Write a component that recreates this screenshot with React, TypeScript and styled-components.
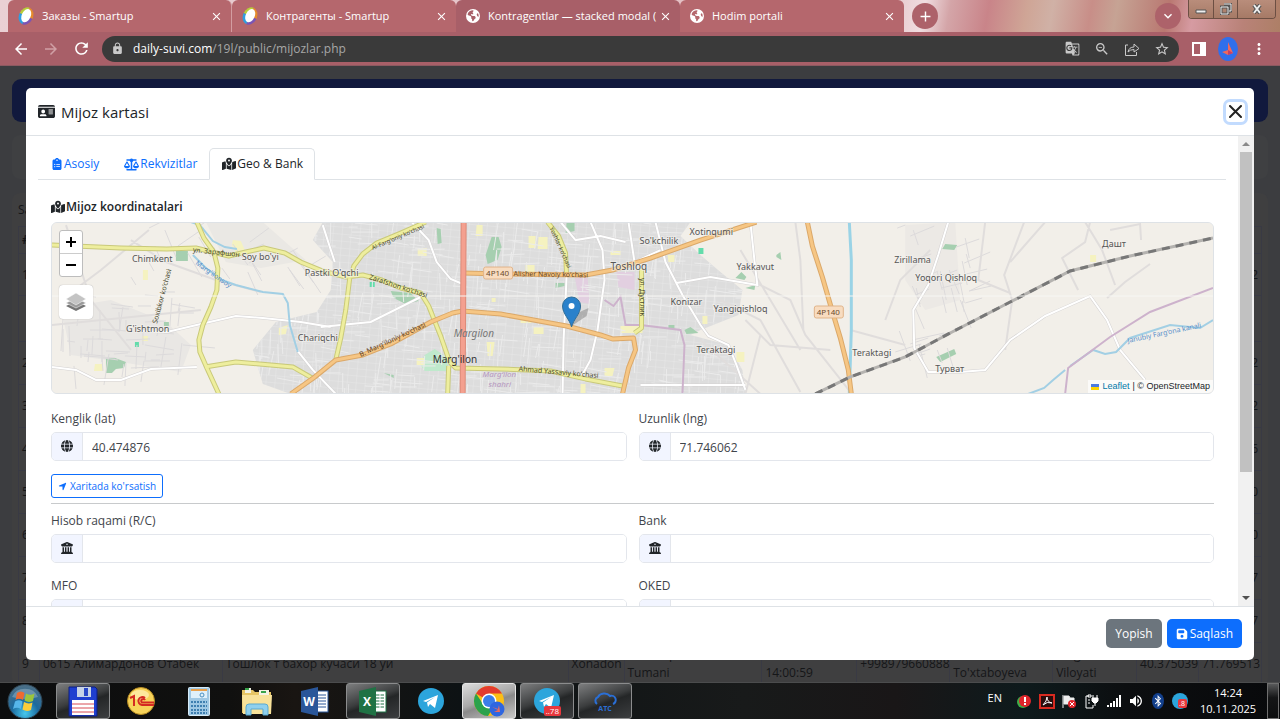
import React from 'react';
import styled, { createGlobalStyle, css } from 'styled-components';
import {
  FaIdCard, FaClipboardList, FaScaleBalanced, FaMapLocationDot, FaGlobe,
  FaLocationArrow, FaBuildingColumns, FaFloppyDisk, FaEarthAmericas, FaBluetoothB,
} from 'react-icons/fa6';
import {
  MdArrowBack, MdArrowForward, MdRefresh, MdLock, MdGTranslate, MdZoomOut,
  MdStarBorder, MdMoreVert, MdClose, MdAdd, MdKeyboardArrowDown, MdVolumeUp,
} from 'react-icons/md';

const GlobalStyle = createGlobalStyle`
  *, *::before, *::after { box-sizing: border-box; }
  body { margin: 0; font-family: "Open Sans", "Noto Sans", sans-serif; font-size: 12px; line-height: 18px; color: #212529; }
  button, input { font: inherit; color: inherit; }
  button { cursor: pointer; padding: 0; border: 0; background: none; }
  svg { display: block; flex: none; }
`;

const Screen = styled.div`
  display: flex;
  flex-direction: column;
  height: 100vh;
  overflow: hidden;
`;

/* ---------- browser chrome ---------- */

const TabStrip = styled.div`
  display: flex;
  align-items: stretch;
  flex: none;
  height: 32px;
  padding-left: 8px;
  background: linear-gradient(100deg, #ead0d4 0%, #e2bcc0 68%, #f0dde0 72%, #d4a5a8 74%, #c98489 77%, #cfa596 80%, #d0b1a6 82%, #c88e88 85%, #c6a394 87%, #b97871 91%, #d69ba2 93%, #b98278 97%, #ad7f66 100%);
`;

const BrowserTab = styled.div<{ $active?: boolean; $divider?: boolean }>`
  display: flex;
  align-items: center;
  width: 224px;
  padding: 0 8px 0 10px;
  color: #fff;
  font-size: 11px;
  border-radius: 6px 6px 0 0;
  background: ${(p) => (p.$active ? '#a85f68' : '#b5676d')};
  ${(p) => p.$divider && css`border-right: 1px solid #d39da1;`}
`;

const TabTitle = styled.span`
  flex: 1;
  margin-left: 8px;
  overflow: hidden;
  white-space: nowrap;
`;

const TabClose = styled.button`
  display: flex;
  color: #fff;
`;

const RoundButton = styled.button<{ $afterTabs?: boolean }>`
  display: flex;
  align-items: center;
  justify-content: center;
  align-self: center;
  width: 26px;
  height: 26px;
  margin-left: ${(p) => (p.$afterTabs ? 8 : 0)}px;
  border-radius: 50%;
  color: #fff;
  background: #ad626a;
`;

const StripSpace = styled.div`
  flex: 1;
`;

const WindowButtons = styled.div`
  display: flex;
  height: 19px;
  margin: 0 4px 0 7px;
  border: 1px solid #6c4f43;
  border-top: 0;
  border-radius: 0 0 4px 4px;
  overflow: hidden;
`;

const WindowButton = styled.button<{ $wide?: boolean }>`
  display: flex;
  align-items: center;
  justify-content: center;
  width: ${(p) => (p.$wide ? 38 : 24)}px;
  background: linear-gradient(#b98d7b, #a67a66);
  & + & { border-left: 1px solid #6c4f43; }
`;

const Toolbar = styled.div`
  display: flex;
  align-items: center;
  flex: none;
  height: 34px;
  padding: 0 12px;
  color: #fff;
  background: #a85f68;
  border-bottom: 1px solid #8c5a61;
`;

const ToolButton = styled.button<{ $dim?: boolean }>`
  display: flex;
  align-items: center;
  justify-content: center;
  width: 18px;
  margin-right: 12px;
  color: ${(p) => (p.$dim ? '#d0a0a5' : '#fff')};
`;

const AddressBar = styled.div`
  display: flex;
  align-items: center;
  flex: 1;
  height: 26px;
  padding: 0 9px;
  gap: 9px;
  border-radius: 13px;
  background: #3a3a3a;
  color: #c9c9c9;
`;

const Address = styled.span`
  flex: 1;
  color: #a7a7a7;
  b { font-weight: 400; color: #fff; }
`;

const AddressIcons = styled.div`
  display: flex;
  gap: 14px;
`;

const ToolbarEnd = styled.div`
  display: flex;
  align-items: center;
  gap: 12px;
  padding-left: 13px;
`;

/* ---------- page behind the dialog ---------- */

const Page = styled.div`
  position: relative;
  flex: 1;
  min-height: 0;
  overflow: hidden;
  padding: 13px 12px 0;
  background: #3c3d40;
  color: #151618;
`;

const NavBar = styled.div`
  height: 43px;
  border-radius: 9px;
  background: #11193d;
`;

const FilterCard = styled.div`
  height: 44px;
  margin-top: 13px;
  border-radius: 8px;
  background: #3f4042;
`;

const ListCard = styled.div`
  margin-top: 14px;
  padding: 8px 6px 0;
  border-radius: 8px;
  background: #3f3f40;
`;

const ListTable = styled.table`
  width: 100%;
  margin-top: 7px;
  table-layout: fixed;
  border-collapse: collapse;
  td, th {
    padding: 0 3px;
    text-align: left;
    white-space: nowrap;
    border: 1px solid #393a44;
  }
`;

const ListRow = styled.tr<{ $h: number }>`
  height: ${(p) => p.$h}px;
  td:last-child { text-align: right; }
`;

const columns = [21, 183, 346, 56, 138, 95, 93, 103, 84, 62, 63];

const rows: [string, string, number][] = [
  ['1', '2', 42], ['', '', 46], ['2', '2', 43], ['3', '2', 43], ['4', '6', 43],
  ['5', '0', 43], ['6', '0', 43], ['7', '7', 43], ['8', '7', 43],
];

/* ---------- dialog ---------- */

const Backdrop = styled.div`
  position: absolute;
  inset: 0;
  display: flex;
  padding: 22px 26px;
`;

const Dialog = styled.section`
  display: flex;
  flex-direction: column;
  flex: 1;
  min-width: 0;
  overflow: hidden;
  border-radius: 5px;
  background: #fff;
  color: #212529;
`;

const DialogHeader = styled.header`
  display: flex;
  align-items: center;
  flex: none;
  height: 48px;
  padding: 0 9px 0 12px;
  gap: 6px;
  border-bottom: 1px solid #dee2e6;
`;

const DialogTitle = styled.h1`
  flex: 1;
  margin: 0;
  font-size: 15px;
  line-height: 20px;
  font-weight: 400;
`;

const CloseButton = styled.button`
  display: flex;
  align-items: center;
  justify-content: center;
  width: 19px;
  height: 20px;
  border-radius: 4px;
  box-shadow: 0 0 0 3px #c2dbfe;
`;

const DialogBody = styled.div`
  display: flex;
  flex: 1;
  min-height: 0;
`;

const ScrollArea = styled.div`
  flex: 1;
  min-width: 0;
  overflow: hidden;
  padding: 12px 12px 0;
`;

const ScrollBar = styled.div`
  display: flex;
  flex-direction: column;
  width: 16px;
  padding: 0 2px;
  background: #f1f1f1;
`;

const ScrollArrow = styled.button`
  display: flex;
  align-items: center;
  justify-content: center;
  flex: none;
  height: 16px;
`;

const ScrollTrack = styled.div`
  flex: 1;
`;

const ScrollThumb = styled.div`
  height: 73%;
  background: #c1c1c1;
`;

const TabList = styled.div`
  display: flex;
  height: 32px;
  border-bottom: 1px solid #dee2e6;
`;

const TabButton = styled.button<{ $active?: boolean }>`
  display: flex;
  align-items: center;
  gap: 1px;
  height: 32px;
  padding: 0 11px 0 12px;
  border: 1px solid transparent;
  border-radius: 5px 5px 0 0;
  color: #0d6efd;
  ${(p) => p.$active && css`
    color: #212529;
    background: #fff;
    border-color: #dee2e6 #dee2e6 #fff;
  `}
`;

const TabPanel = styled.div`
  padding: 18px 12px 0 13px;
`;

const SectionTitle = styled.h2`
  display: flex;
  align-items: center;
  gap: 1px;
  margin: 0 0 6px;
  font-size: 12px;
  line-height: 18px;
  font-weight: 600;
`;

const FieldGrid = styled.div`
  display: grid;
  grid-template-columns: 1fr 1fr;
  gap: 14px 12px;
`;

const Field = styled.div`
  display: flex;
  flex-direction: column;
  gap: 4px;
  min-width: 0;
  label { align-self: flex-start; color: #3f454b; }
`;

const InputGroup = styled.div`
  display: flex;
  height: 29px;
  border: 1px solid #e3e6ec;
  border-radius: 5px;
  overflow: hidden;
`;

const InputIcon = styled.span`
  display: flex;
  justify-content: center;
  width: 31px;
  padding-top: 7px;
  border-right: 1px solid #e3e6ec;
  background: #f2f5ff;
`;

const TextInput = styled.input`
  flex: 1;
  min-width: 0;
  padding: 2px 9px 0;
  border: 0;
  outline: 0;
  color: #3f454b;
`;

const OutlineButton = styled.button`
  display: flex;
  align-items: center;
  gap: 3px;
  height: 24px;
  margin-top: 13px;
  padding: 0 6px;
  border: 1px solid #0d6efd;
  border-radius: 3px;
  color: #0d6efd;
  font-size: 10px;
`;

const Rule = styled.hr`
  height: 1px;
  margin: 5px 0 8px;
  border: 0;
  background: #c8cacc;
`;

const DialogFooter = styled.footer`
  display: flex;
  align-items: center;
  justify-content: flex-end;
  gap: 5px;
  flex: none;
  height: 54px;
  padding: 0 12px;
  border-top: 1px solid #dee2e6;
`;

const FooterButton = styled.button<{ $primary?: boolean }>`
  display: flex;
  align-items: center;
  gap: 2px;
  height: 29px;
  padding: 0 9px;
  border-radius: 5px;
  color: #fff;
  background: ${(p) => (p.$primary ? '#0d6efd' : '#6c757d')};
`;

/* ---------- map ---------- */

const MapFrame = styled.div`
  position: relative;
  height: 172px;
  margin-bottom: 16px;
  border: 1px solid #dee2e6;
  border-radius: 6px;
  overflow: hidden;
  background: #f2efe9;
`;

const MapArt = styled.svg`
  width: 100%;
  height: 100%;
`;

const MapControls = styled.div`
  position: absolute;
  top: 7px;
  left: 7px;
  display: flex;
  flex-direction: column;
  align-items: flex-start;
  gap: 8px;
`;

const ZoomGroup = styled.div`
  display: flex;
  flex-direction: column;
  border: 1px solid #bdbdbd;
  border-radius: 3px;
  background: #fff;
  overflow: hidden;
`;

const ZoomButton = styled.button`
  display: flex;
  align-items: center;
  justify-content: center;
  width: 22px;
  height: 22px;
  & + & { border-top: 1px solid #ccc; height: 23px; }
`;

const LayersButton = styled.button`
  display: flex;
  align-items: center;
  justify-content: center;
  width: 34px;
  height: 34px;
  border-radius: 4px;
  background: #fff;
  box-shadow: 0 0 1px #999;
`;

const Attribution = styled.div`
  position: absolute;
  right: 0;
  bottom: 0;
  display: flex;
  align-items: center;
  gap: 3px;
  height: 13px;
  padding: 0 3px;
  font-family: "Liberation Sans", Arial, sans-serif;
  font-size: 9px;
  line-height: 13px;
  background: #fbfaf8;
  a { color: #0078a8; text-decoration: none; }
`;

/* Pseudo-random residential streets, stable between renders. */
function makeStreets(x0: number, y0: number, w: number, h: number, count: number, tilt: number, seed: number) {
  let s = seed;
  const rnd = () => {
    s = (s * 16807) % 2147483647;
    return s / 2147483647;
  };
  let d = '';
  for (let i = 0; i < count; i += 1) {
    const x = x0 + rnd() * w;
    const y = y0 + rnd() * h;
    const len = 8 + rnd() * 26;
    const a = (rnd() > 0.5 ? 0 : Math.PI / 2) + tilt + (rnd() - 0.5) * 0.25;
    d += `M${x.toFixed(0)} ${y.toFixed(0)}l${(Math.cos(a) * len).toFixed(0)} ${(Math.sin(a) * len).toFixed(0)}`;
  }
  return d;
}

const city = 'M322 222H690L680 236L700 255L720 272L742 290L738 315L700 330L690 335L728 345L742 370L745 394H290L262 384L252 350L275 322L316 312L330 290L332 262L312 240Z';
const cityStreets = makeStreets(250, 218, 500, 176, 440, 0.08, 77);
const villageStreets = makeStreets(60, 290, 125, 80, 60, 0.05, 31);
const northStreets = makeStreets(130, 224, 190, 55, 26, -0.5, 53);
const eastStreets = makeStreets(895, 226, 75, 130, 38, -0.3, 91);

const yellowRoads = [
  'M51 245L120 248L166 249L195 248L228 256L245 252L263 248L284 253L300 262L322 271L345 277L362 275L381 280L400 288L420 293L428 306L440 336L449 362',
  'M196 222L203 238L213 252L217 268L216 290L210 307L202 325L198 340L199 352L206 368L218 394',
  'M204 367L235 362L270 365L292 367L313 379',
  'M350 277L353 266L362 254L376 243L400 233L425 222',
  'M349 278L345 310L340 338L335 360',
  'M449 362L455 368L500 369L550 371L585 379L622 386',
  'M641 268V328L634 333',
  'M547 222L558 236L565 253L566 274',
  'M448 366L447 394',
];

const orangeRoads = [
  'M290 394L314 377L335 360L362 355L390 344L430 322L452 313L462 311L500 314L566 326L600 335L612 339L633 338L635 350L628 368L622 394',
  'M463 273L500 274L585 275L612 270L650 258L700 240L756 222',
  'M807 222L812 246L822 277L831 308L840 338L848 370L851 394',
];

const whiteRoads = [
  'M140 331L166 332L200 324L235 316L262 318L300 322L330 327',
  'M51 367L75 370L95 380L120 380L150 369L196 367',
  'M296 350L312 370L335 394',
  'M322 225L334 262',
  'M411 222L428 240L436 262L450 279L462 284',
  'M320 327L370 322L420 297',
  'M566 276L565 300L563 340L562 394',
  'M590 222L602 250L604 280L597 330L590 360L580 378',
  'M628 222L634 262L660 250',
  'M655 222L665 262L682 295L700 325L708 336L728 345L736 365L745 390',
  'M676 283L710 277L757 285L754 260L750 222',
  'M640 385H745',
  'M948 222L938 255L928 285L913 310L914 348L928 372L960 372L985 370L1010 340L1045 316L1090 296L1107 320L1120 350L1145 380',
  'M560 222L575 240L600 236L625 242',
];

const faintRoads = [
  'M60 300L100 270L148 230', 'M130 240L165 262L215 280L260 292', 'M65 225L90 300L130 350', 'M51 325L200 310',
  'M740 250L770 300L800 350', 'M758 284L790 300L805 335L850 392', 'M795 222L800 260L803 330', 'M745 320L770 345L830 350',
  'M720 300L760 320L800 392', 'M985 222L978 280L1010 293', 'M1024 222L1004 275L1012 300L1005 350', 'M1045 222L1010 262',
  'M1090 222L1085 242L1062 258L1078 290', 'M1085 222L1102 250L1115 285', 'M1107 298L1125 282L1150 264', 'M1110 230L1140 224L1141 240',
  'M930 250L900 280L885 320', 'M760 335L745 394', 'M850 330L905 345', 'M700 340L760 394',
];

const greens = [
  'M175 251h12v10h-12z', 'M105 358h9l11 4l-2 6l-8 1l-4 4h-6z', 'M163 322h5v4h-5z', 'M390 291l20 2l8 8l-13 3l-12-6z', 'M436 228l4 1l1 14l-4 1z',
  'M491 237l7 0l3 10l-4 13l-10 4l-2-9z', 'M566 223h8v8l-9 2z', 'M555 283h9v3l-9 2z', 'M735 278l6-6l5 5l-2 3z', 'M745 288l10-3l-1 5z', 'M776 255l4-3l1 8l-5-3z',
  'M945 244l12 1l-3 5l-12-1z', 'M936 357l18-8l2 5l-16 8z', 'M684 330l6-3l8 6l-12 1z', 'M383 373l10 2v3z', 'M668 325h6v4h-6z',
];

const sands = [
  'M232 240l8 1l4 9l-9 2l-4-7z', 'M142 270h5v10h-5z', 'M94 364h8v7h-9z', 'M278 328l9-3l-2 9l-7 1z', 'M141 336h6v5h-6z', 'M417 248h9v8h-9z', 'M476 225h6v11h-7z',
  'M528 236h7v12h-7z', 'M538 237h9v12h-10z', 'M610 251h10v4h-10z', 'M486 342h8l-2 14h-5z', 'M520 318h11v5h-11z', 'M533 327h10v7h-10z', 'M525 265h9v7h-9z',
  'M620 326h22v7h-22z', 'M604 368h10l-2 8h-8z', 'M667 255h7v7h-6z', 'M702 316h5v8h-5z', 'M736 352h8v10h-8z', 'M416 358h8v7h-8z', 'M491 298h4v4h-4z', 'M580 384h5v9h-5z',
  'M1090 255h6v7h-6z',
];

const railway = 'M815 394L850 377L905 357L950 333L1010 302L1070 271L1130 256L1213 238';

type MapLabel = [number, number, string, number];
type RoadName = [number, number, string, number, string, number];

const labels: MapLabel[] = [
  [131, 262, 'Chimkent', 9], [241, 260, "Soy bo'yi", 9], [304, 276, "Pastki O'qchi", 9], [125, 332, "G'ishtmon", 9], [297, 341, 'Chariqchi', 9],
  [610, 270, 'Toshloq', 10], [639, 244, "So'kchilik", 9], [689, 235, 'Xotinqumi', 9], [736, 270, 'Yakkavut', 9], [670, 305, 'Konizar', 9],
  [713, 312, 'Yangiqishloq', 9], [696, 353, 'Teraktagi', 9], [852, 356, 'Teraktagi', 9], [894, 263, 'Zirillama', 9], [915, 281, 'Yoqori Qishloq', 9],
  [935, 372, 'Турват', 9], [1102, 247, 'Дашт', 9],
];

const roadNames: RoadName[] = [
  [192, 252, 'ул. Зарафшон', 7, '#4a4a2e', 6], [372, 250, "Al-Farg'oniy ko'chasi", 6, '#4a4a2e', -23], [368, 279, "Zarafshon ko'chasi", 7, '#4a4a2e', 18],
  [156, 324, "Soxibkor ko'chasi", 7, '#4a4a2e', -75], [360, 357, "B. Marg'iloniy ko'chasi", 7, '#5f4223', -25], [513, 276, 'Alisher Navoiy koʻchasi', 7, '#5f4223', 1],
  [518, 371, 'Ahmad Yassaviy koʻchasi', 7, '#4a4a2e', 5], [549, 228, "Yoshlar ko'chasi", 6, '#4a4a2e', 66], [639, 278, 'ул. Дустлик', 7, '#4a4a2e', 90],
  [194, 264, "Marg'ilonsoy", 7, '#5b8fc9', 35], [1128, 343, 'Janubiy Farg‘ona kanali', 7, '#5b8fc9', -12],
];

function MapDrawing() {
  return (
    <MapArt viewBox="51 222 1162 172" preserveAspectRatio="xMidYMid slice" fill="none" role="img" aria-label="Xarita" fontFamily="Noto Sans, sans-serif">
      <defs>
        <clipPath id="cityClip"><path d={city} /></clipPath>
        <pattern id="blocks" width="9" height="7" patternUnits="userSpaceOnUse" patternTransform="rotate(5)">
          <path d="M0 0H9M0 0V7" stroke="#e8e8e8" strokeWidth="1" />
        </pattern>
      </defs>
      <path d="M51 222H1213V394H51Z" fill="#f2efe9" />
      <path d="M60 308L110 300L165 322L190 345L180 372L120 362L70 355Z" fill="#e9e7e4" />
      <path d="M205 222L262 222L305 260L260 268L225 262Z" fill="#eae8e4" />
      <path d="M905 225L955 222L960 300L925 310L905 280Z" fill="#ece9e5" />
      <path d={city} fill="#dddddd" />
      <path d={city} fill="url(#blocks)" />
      <path d="M574 276h13l2 28l-10-2z M616 272h18v18l-16-3z" fill="#e2cfe0" />
      <path d="M424 355l10-6l12 8l2 14h-24l-5-7z" fill="#bfe9cc" />
      <path d={greens.join('')} fill="#a6cfb0" />
      <path d="M698 248h5v6h-5zM369 282h5v5h-5zM134 342h4v5h-4z" fill="#63dcab" />
      <path d={sands.join('')} fill="#f5f2c0" />
      <g clipPath="url(#cityClip)"><path d={cityStreets} stroke="#ebebeb" /></g>
      <path d={villageStreets + northStreets + eastStreets} stroke="#dcdadb" />
      <path d={faintRoads.join('')} stroke="#e0dddc" strokeWidth="2" />
      <path d={whiteRoads.join('')} stroke="#d4d2d2" strokeWidth="3" />
      <path d={whiteRoads.join('')} stroke="#fff" strokeWidth="2" />
      <path d="M190 222L199 225L212 241L224 247L236 249M192 255L205 268L221 280L235 285L262 292L282 294L287 303L289 325L297 352" stroke="#a2cfe4" strokeWidth="2" />
      <path d="M849 222L851 260L851 330L849 394" stroke="#9ad3e6" strokeWidth="3" />
      <path d="M1213 320L1200 328L1170 325L1130 338L1116 352L1105 354L1093 350L1070 366M1065 370L1053 380L1044 388L1028 394" stroke="#a2cfe4" strokeWidth="2" />
      <path d="M1213 288L1150 312L1110 337L1068 368L1065 394M604 300L613 306L620 297L625 325L640 325L680 330L684 345L682 394L712 394" stroke="#cdb2cc" strokeWidth="2" />
      <path d={yellowRoads.join('')} stroke="#c9c97a" strokeWidth="5" strokeLinejoin="round" />
      <path d={yellowRoads.join('')} stroke="#eeee9e" strokeWidth="3" strokeLinejoin="round" />
      <path d={orangeRoads.join('')} stroke="#dba869" strokeWidth="5" strokeLinejoin="round" />
      <path d={orangeRoads.join('')} stroke="#f6c684" strokeWidth="3" strokeLinejoin="round" />
      <path d="M463 222L462 394" stroke="#dc8a78" strokeWidth="6" />
      <path d="M463 222L462 394" stroke="#f4a08f" strokeWidth="4" />
      <path d={railway} stroke="#b5b3b0" strokeWidth="3" />
      <path d={railway} stroke="#777" strokeWidth="3" strokeDasharray="8 6" />
      <path d="M51 296H1213" stroke="#f8f7f4" />
      {[[483, 267], [814, 306]].map(([x, y]) => (
        <g key={x}>
          <rect x={x} y={y} width="29" height="12" rx="2" fill="#f8dcc0" stroke="#e0b48a" />
          <text x={x + 14} y={y + 9} fontSize="8" textAnchor="middle" fill="#6b4a2c">4P140</text>
        </g>
      ))}
      {roadNames.map(([x, y, t, size, color, angle]) => (
        <text key={t} x={x} y={y} fontSize={size} fill={color} transform={`rotate(${angle} ${x} ${y})`}>{t}</text>
      ))}
      {labels.map(([x, y, t, size]) => (
        <text key={`${t}${x}`} x={x} y={y} fontSize={size} fill="#555" stroke="#f4f2ee" strokeWidth="2" paintOrder="stroke" strokeOpacity="0.6">{t}</text>
      ))}
      <text x="432" y="363" fontSize="10" fill="#333">Marg'ilon</text>
      <text x="453" y="337" fontSize="10" fontStyle="italic" fill="#777">Margilon</text>
      <g fontSize="8" fontStyle="italic" fill="#b595bf">
        <text x="482" y="377">Marg‘ilon</text>
        <text x="488" y="387">shahri</text>
      </g>
      <path d="M571 326L579 312L588 308L586 316Z" fill="#777" opacity="0.45" />
      <path d="M571 327C569 319 562 314 562 306A9 9 0 0 1 580 306C580 314 573 319 571 327Z" fill="#2a81cb" stroke="#2e6c97" />
      <circle cx="571" cy="306" r="3" fill="#fff" />
    </MapArt>
  );
}

/* ---------- taskbar ---------- */

const TaskBar = styled.footer`
  display: flex;
  align-items: stretch;
  flex: none;
  height: 37px;
  color: #fff;
  background: linear-gradient(90deg, #0c0d0e 0%, #10100f 18%, #191512 23%, #0d1214 36%, #181a1a 58%, #191617 70%, #0e1a1c 80%, #0c0e10 88%, #08090b 100%);
  border-top: 1px solid #4b4c4d;
`;

const StartButton = styled.button`
  display: flex;
  align-items: center;
  justify-content: center;
  width: 50px;
  margin-right: 6px;
`;

const TaskButtons = styled.div`
  display: flex;
  gap: 4px;
  flex: 1;
`;

const TaskButton = styled.button<{ $state?: 'open' | 'active' }>`
  position: relative;
  display: flex;
  align-items: center;
  justify-content: center;
  width: 54px;
  border: 1px solid transparent;
  border-radius: 3px;
  ${(p) => p.$state === 'open' && css`
    border-color: #8b8c8d;
    background: linear-gradient(160deg, #7d7e7f, #3b3d3e 45%, #242627 55%, #3c3e40);
  `}
  ${(p) => p.$state === 'active' && css`
    border-color: #e4e4e4;
    background: linear-gradient(160deg, #dcdcdc, #a9a9a9 45%, #8a8a8a 55%, #c9c9c9);
  `}
`;

const CountBadge = styled.span`
  position: absolute;
  right: 12px;
  bottom: 2px;
  padding: 0 2px;
  border-radius: 2px;
  font-size: 8px;
  line-height: 10px;
  background: #e8373d;
`;

const Tray = styled.div`
  display: flex;
  align-items: center;
  gap: 7px;
`;

const Language = styled.span`
  margin: 0 8px 6px 0;
  font-size: 11px;
`;

const Clock = styled.time`
  width: 66px;
  font-size: 11px;
  line-height: 16px;
  text-align: center;
`;

const ShowDesktop = styled.button`
  width: 12px;
  margin: 0 1px 0 6px;
  border: 1px solid #6f6f6f;
  background: linear-gradient(#58595a, #151617 40%, #0c0d0e);
`;

const SmartupIcon = () => (
  <svg width="16" height="18" viewBox="0 0 16 18">
    <g transform="rotate(25 8 9)">
      <path d="M8 0A7 9 0 0 0 1 9H8Z" fill="#b8cf3b" />
      <path d="M8 0A7 9 0 0 1 15 9H8Z" fill="#e58a2c" />
      <path d="M15 9A7 9 0 0 1 8 18V9Z" fill="#7a55b5" />
      <path d="M8 18A7 9 0 0 1 1 9H8Z" fill="#2f9ee0" />
      <ellipse cx="8" cy="8.500" rx="4.500" ry="7" fill="#fff" />
    </g>
  </svg>
);

const TelegramIcon = ({ size = 26 }: { size?: number }) => (
  <svg width={size} height={size} viewBox="0 0 26 26">
    <circle cx="13" cy="13" r="13" fill="#2ca5dc" />
    <path d="M5 13L20 7L17 20L12 16L10 19L9 14.500L17 9L8 14Z" fill="#fff" />
  </svg>
);

const StartIcon = () => (
  <svg width="36" height="35" viewBox="0 0 36 35">
    <defs>
      <radialGradient id="orb" cx="50%" cy="85%" r="80%">
        <stop offset="0" stopColor="#46c8ee" /><stop offset="0.500" stopColor="#1c6a9e" /><stop offset="1" stopColor="#4a6f88" />
      </radialGradient>
    </defs>
    <circle cx="18" cy="17.500" r="17" fill="url(#orb)" stroke="#2d4352" />
    <path d="M5 13A14 13 0 0 1 31 13Q18 17 5 13Z" fill="#fff" opacity="0.250" />
    <path d="M10 9Q14 6 17.500 9L16 16Q12 13.500 8.500 16Z" fill="#ee6a30" />
    <path d="M19 9.500Q23 12 27.500 9.500L26 17Q21.500 19 17.500 16.500Z" fill="#9bc53c" />
    <path d="M8 17.500Q12 15 15.500 17.500L14 25Q10 22.500 6 25Z" fill="#56b6ea" />
    <path d="M17 18Q21 20.500 25.500 18.500L24 26Q19.500 28 15.500 25.500Z" fill="#fbcd3a" />
  </svg>
);

const FloppyIcon = () => (
  <svg width="30" height="31" viewBox="0 0 30 31">
    <path d="M1 1H27L29 3V30H1Z" fill="#1f3fd0" stroke="#0c1f80" />
    <path d="M9 1H23V11H9Z" fill="#c7d3e6" /><path d="M16 2H20V10H16Z" fill="#2a48c8" />
    <path d="M4 14H26V29H4Z" fill="#fff" />
    <path d="M4 18H26M4 22H26M4 26H26" stroke="#d84c55" />
  </svg>
);

const OneCIcon = () => (
  <svg width="28" height="28" viewBox="0 0 28 28">
    <circle cx="14" cy="14" r="13.500" fill="#f7d35a" stroke="#b58a22" />
    <ellipse cx="13" cy="8" rx="9" ry="5" fill="#fff1b8" opacity="0.700" />
    <path d="M3 11L7 9V19M18 11A4 4 0 1 0 15 18H27M18 13A2 2 0 1 0 15 15.500H27" fill="none" stroke="#d42a22" strokeWidth="2" />
  </svg>
);

const CalculatorIcon = () => (
  <svg width="22" height="29" viewBox="0 0 22 29">
    <rect x="0.500" y="0.500" width="21" height="28" rx="1" fill="#9fc8e4" stroke="#d7ebf7" />
    <rect x="3" y="3" width="16" height="8" fill="#dff0fa" /><path d="M3 3H19" stroke="#e8a04c" strokeWidth="2" />
    <path d="M3 15H19M3 19H19M3 23H19M3 26H19" stroke="#3f7fb0" strokeWidth="2" strokeDasharray="2 1" />
    <circle cx="14" cy="8" r="2" fill="none" stroke="#4a8fc0" />
  </svg>
);

const ExplorerIcon = () => (
  <svg width="32" height="29" viewBox="0 0 32 29">
    <path d="M1 3H12L14 5H30V26H1Z" fill="#e6c565" />
    <path d="M4 1H10V6H4ZM18 3H28V8H18Z" fill="#f3f3e4" /><path d="M4 2h4M20 5h5" stroke="#38a34a" strokeWidth="2" />
    <path d="M1 8H31L30 27H2Z" fill="#f8e29a" />
    <path d="M5 28V20Q5 17 8 17H24Q27 17 27 20V28H22V22H10V28Z" fill="#8fd0ee" stroke="#5aa9d0" />
  </svg>
);

const OfficeIcon = ({ letter, color }: { letter: string; color: string }) => (
  <svg width="30" height="29" viewBox="0 0 30 29">
    <rect x="15" y="4" width="13" height="21" fill="#fff" stroke={color} />
    <path d="M18 8H26M18 11H26M18 14H26M18 17H26M18 20H26" stroke={color} />
    {letter === 'X' && <path d="M22 5V24" stroke="#fff" />}
    <path d="M1 4L18 0V29L1 25Z" fill={color} />
    <text x="9" y="19" fontSize="12" fontWeight="700" textAnchor="middle" fill="#fff">{letter}</text>
  </svg>
);

const ChromeIcon = () => (
  <svg width="32" height="32" viewBox="0 0 32 32">
    <circle cx="16" cy="16" r="15" fill="#fbbf16" />
    <path d="M16 16L3 8.500A15 15 0 0 1 29 8.500H16Z" fill="#e33b2e" />
    <path d="M3 8.500A15 15 0 0 0 15 31L21 21L10 19Z" fill="#2ba24c" />
    <circle cx="16" cy="16" r="7.500" fill="#fff" /><circle cx="16" cy="16" r="6" fill="#3b7de9" />
    <circle cx="24" cy="24" r="7.500" fill="#2f66e0" /><path d="M19 22L25 24L26 20L27 27L21 27L25 25Z" fill="#ef6a5a" />
  </svg>
);

const CloudIcon = () => (
  <svg width="26" height="24" viewBox="0 0 26 24" fill="none" stroke="#2a6fd6" strokeWidth="2">
    <path d="M5 15A4 4 0 0 1 6 8A7 6 0 0 1 18 7A4 4 0 0 1 21 15" />
    <text x="13" y="22" fontSize="7" fontWeight="700" textAnchor="middle" fill="#2a6fd6" stroke="none">ATC</text>
  </svg>
);

const ShareIcon = () => (
  <svg width="16" height="16" viewBox="0 0 16 16" fill="none" stroke="currentColor">
    <path d="M4 4H1.500V14.500H12.500V11M4 11Q5 6 10 6V3L15 7.500L10 11V8.500Q6 8.500 4 11Z" />
  </svg>
);

const fields = [
  { id: 'rc', label: 'Hisob raqami (R/C)' }, { id: 'bank', label: 'Bank' },
  { id: 'mfo', label: 'MFO' }, { id: 'oked', label: 'OKED' },
];

export default function App() {
  return (
    <Screen>
      <GlobalStyle />
      <TabStrip>
        <BrowserTab $divider><SmartupIcon /><TabTitle>Заказы - Smartup</TabTitle><TabClose aria-label="Yopish"><MdClose size={13} /></TabClose></BrowserTab>
        <BrowserTab><SmartupIcon /><TabTitle>Контрагенты - Smartup</TabTitle><TabClose aria-label="Yopish"><MdClose size={13} /></TabClose></BrowserTab>
        <BrowserTab $active><FaEarthAmericas size={14} /><TabTitle>Kontragentlar — stacked modal (</TabTitle><TabClose aria-label="Yopish"><MdClose size={13} /></TabClose></BrowserTab>
        <BrowserTab><FaEarthAmericas size={14} /><TabTitle>Hodim portali</TabTitle><TabClose aria-label="Yopish"><MdClose size={13} /></TabClose></BrowserTab>
        <RoundButton $afterTabs aria-label="Yangi tab"><MdAdd size={17} /></RoundButton>
        <StripSpace />
        <RoundButton aria-label="Tablar"><MdKeyboardArrowDown size={16} /></RoundButton>
        <WindowButtons>
          <WindowButton aria-label="Kichraytirish"><svg width="12" height="10" viewBox="0 0 12 10"><path d="M1 6h10v3H1z" fill="#eee" stroke="#555" /></svg></WindowButton>
          <WindowButton aria-label="Tiklash"><svg width="12" height="12" viewBox="0 0 12 12" fill="none"><path d="M4 1h7v7H9M1 4h7v7H1z" stroke="#555" strokeWidth="3" /><path d="M4 1h7v7H9M1 4h7v7H1z" stroke="#eee" /></svg></WindowButton>
          <WindowButton $wide aria-label="Oynani yopish"><svg width="12" height="10" viewBox="0 0 12 10"><path d="M3 1l6 8M9 1l-6 8" stroke="#555" strokeWidth="4" /><path d="M3 1l6 8M9 1l-6 8" stroke="#eee" strokeWidth="2" /></svg></WindowButton>
        </WindowButtons>
      </TabStrip>

      <Toolbar>
        <ToolButton aria-label="Orqaga"><MdArrowBack size={18} /></ToolButton>
        <ToolButton aria-label="Oldinga" $dim><MdArrowForward size={18} /></ToolButton>
        <ToolButton aria-label="Yangilash"><MdRefresh size={19} /></ToolButton>
        <AddressBar>
          <MdLock size={13} />
          <Address><b>daily-suvi.com</b>/19l/public/mijozlar.php</Address>
          <AddressIcons><MdGTranslate size={15} /><MdZoomOut size={16} /><ShareIcon /><MdStarBorder size={16} /></AddressIcons>
        </AddressBar>
        <ToolbarEnd>
          <svg width="14" height="14" viewBox="0 0 14 14"><path d="M1 1h12v12H1z" fill="none" stroke="#fff" strokeWidth="2" /><path d="M8 1h5v12H8z" fill="#fff" /></svg>
          <svg width="20" height="24" viewBox="0 0 20 24"><ellipse cx="10" cy="12" rx="10" ry="12" fill="#2f6fec" /><path d="M10 5L15 16L10 18L4 15L10 13Z" fill="#f0685c" /><path d="M10 13L15 16L10 18Z" fill="#c23f6a" /></svg>
          <MdMoreVert size={18} />
        </ToolbarEnd>
      </Toolbar>

      <Page>
        <NavBar />
        <FilterCard />
        <ListCard>
          Sa
          <ListTable>
            <colgroup>{columns.map((w, i) => <col key={i} style={{ width: `${(w / 1244) * 100}%` }} />)}</colgroup>
            <thead><ListRow $h={27}><th>#</th><th colSpan={10} /></ListRow></thead>
            <tbody>
              {rows.map(([n, v, h], i) => (
                <ListRow key={i} $h={h}><td>{n}</td><td colSpan={9} /><td>{v}</td></ListRow>
              ))}
              <ListRow $h={43}>
                <td>9</td><td>0615 Алимардонов Отабек</td><td>Тошлок т бахор кучаси 18 уй</td><td>Xonadon</td>
                <td>Toshloq<br />Tumani</td><td><br />14:00:59</td><td>+998979660888</td><td><br />To'xtaboyeva</td>
                <td>Farg'ona<br />Viloyati</td><td>40.375039</td><td>71.769513</td>
              </ListRow>
            </tbody>
          </ListTable>
        </ListCard>

        <Backdrop>
          <Dialog role="dialog" aria-labelledby="dialog-title">
            <DialogHeader>
              <FaIdCard size={17} />
              <DialogTitle id="dialog-title">Mijoz kartasi</DialogTitle>
              <CloseButton aria-label="Yopish"><svg width="13" height="13" viewBox="0 0 13 13"><path d="M1 1L12 12M12 1L1 12" stroke="#222" strokeWidth="2" strokeLinecap="round" /></svg></CloseButton>
            </DialogHeader>
            <DialogBody>
              <ScrollArea>
                <TabList role="tablist">
                  <TabButton role="tab"><FaClipboardList size={12} />Asosiy</TabButton>
                  <TabButton role="tab"><FaScaleBalanced size={15} />Rekvizitlar</TabButton>
                  <TabButton role="tab" $active aria-selected><FaMapLocationDot size={14} />Geo &amp; Bank</TabButton>
                </TabList>
                <TabPanel role="tabpanel">
                  <SectionTitle><FaMapLocationDot size={14} />Mijoz koordinatalari</SectionTitle>
                  <MapFrame>
                    <MapDrawing />
                    <MapControls>
                      <ZoomGroup>
                        <ZoomButton aria-label="Kattalashtirish"><svg width="10" height="10" viewBox="0 0 10 10"><path d="M0 5H10M5 0V10" stroke="#000" strokeWidth="2" /></svg></ZoomButton>
                        <ZoomButton aria-label="Kichiklashtirish"><svg width="10" height="10" viewBox="0 0 10 10"><path d="M0 5H10" stroke="#000" strokeWidth="2" /></svg></ZoomButton>
                      </ZoomGroup>
                      <LayersButton aria-label="Qatlamlar">
                        <svg width="20" height="20" viewBox="0 0 20 20">
                          <path d="M0 14L10 9L20 14L10 19Z" fill="#747474" /><path d="M0 11L10 6L20 11L10 16Z" fill="#9a9a9a" stroke="#fff" strokeWidth="0.500" /><path d="M0 7L10 1L20 7L10 13Z" fill="#c4c4c4" stroke="#fff" strokeWidth="0.500" />
                        </svg>
                      </LayersButton>
                    </MapControls>
                    <Attribution>
                      <svg width="8" height="6" viewBox="0 0 8 6"><path d="M0 0h8v3H0z" fill="#4c7be1" /><path d="M0 3h8v3H0z" fill="#ffd500" /></svg>
                      <a href="#leaflet">Leaflet</a><span>| © OpenStreetMap</span>
                    </Attribution>
                  </MapFrame>
                  <FieldGrid>
                    <Field>
                      <label htmlFor="lat">Kenglik (lat)</label>
                      <InputGroup><InputIcon><FaGlobe size={12} /></InputIcon><TextInput id="lat" defaultValue="40.474876" /></InputGroup>
                    </Field>
                    <Field>
                      <label htmlFor="lng">Uzunlik (lng)</label>
                      <InputGroup><InputIcon><FaGlobe size={12} /></InputIcon><TextInput id="lng" defaultValue="71.746062" /></InputGroup>
                    </Field>
                  </FieldGrid>
                  <OutlineButton><FaLocationArrow size={9} />Xaritada ko'rsatish</OutlineButton>
                  <Rule />
                  <FieldGrid>
                    {fields.map((f) => (
                      <Field key={f.id}>
                        <label htmlFor={f.id}>{f.label}</label>
                        <InputGroup><InputIcon><FaBuildingColumns size={12} /></InputIcon><TextInput id={f.id} /></InputGroup>
                      </Field>
                    ))}
                  </FieldGrid>
                </TabPanel>
              </ScrollArea>
              <ScrollBar>
                <ScrollArrow aria-label="Yuqoriga"><svg width="8" height="4" viewBox="0 0 8 4"><path d="M0 4L4 0L8 4Z" fill="#8a8a8a" /></svg></ScrollArrow>
                <ScrollTrack><ScrollThumb /></ScrollTrack>
                <ScrollArrow aria-label="Pastga"><svg width="8" height="4" viewBox="0 0 8 4"><path d="M0 0L4 4L8 0Z" fill="#505050" /></svg></ScrollArrow>
              </ScrollBar>
            </DialogBody>
            <DialogFooter>
              <FooterButton>Yopish</FooterButton>
              <FooterButton $primary><FaFloppyDisk size={12} />Saqlash</FooterButton>
            </DialogFooter>
          </Dialog>
        </Backdrop>
      </Page>

      <TaskBar>
        <StartButton aria-label="Start"><StartIcon /></StartButton>
        <TaskButtons>
          <TaskButton $state="open" aria-label="Total Commander"><FloppyIcon /></TaskButton>
          <TaskButton aria-label="1C"><OneCIcon /></TaskButton>
          <TaskButton aria-label="Kalkulyator"><CalculatorIcon /></TaskButton>
          <TaskButton aria-label="Fayllar"><ExplorerIcon /></TaskButton>
          <TaskButton aria-label="Word"><OfficeIcon letter="W" color="#2a5699" /></TaskButton>
          <TaskButton $state="open" aria-label="Excel"><OfficeIcon letter="X" color="#1f7244" /></TaskButton>
          <TaskButton aria-label="Telegram"><TelegramIcon /></TaskButton>
          <TaskButton $state="active" aria-label="Chrome"><ChromeIcon /></TaskButton>
          <TaskButton $state="open" aria-label="Telegram"><TelegramIcon /><CountBadge>..78</CountBadge></TaskButton>
          <TaskButton $state="open" aria-label="ATC"><CloudIcon /></TaskButton>
        </TaskButtons>
        <Tray>
          <Language>EN</Language>
          <svg width="15" height="15" viewBox="0 0 15 15"><circle cx="6" cy="8" r="6" fill="#3fae49" /><circle cx="8" cy="7" r="6" fill="#e0242b" /><path d="M8 3v5M8 9v2" stroke="#fff" strokeWidth="2" /></svg>
          <svg width="16" height="15" viewBox="0 0 16 15"><path d="M1 1h14v13H1z" fill="#2a0c0c" stroke="#d92a20" strokeWidth="2" /><path d="M4 11Q8 7 8 3Q8 8 13 9Q8 7 4 11Z" fill="none" stroke="#fff" /></svg>
          <svg width="15" height="15" viewBox="0 0 15 15"><path d="M1 1v13M2 2h5l1 2h4v6H2z" fill="#eee" stroke="#eee" /><circle cx="10" cy="10" r="4" fill="#e0242b" /><path d="M8 8l4 4M12 8l-4 4" stroke="#fff" /></svg>
          <svg width="15" height="15" viewBox="0 0 15 15" fill="none" stroke="#fff"><path d="M5 2H2v12h7v-3M4 1h3v2H4zM4 6h2M4 9h2" /><path d="M9 1v3M13 1v3M8 4h6v3l-2 2H10L8 7zM11 9v3" fill="#fff" /></svg>
          <svg width="15" height="14" viewBox="0 0 15 14" stroke="#fff" strokeWidth="2"><path d="M2 13v-2M5 13v-4M8 13V7M11 13V4M14 13V1" /></svg>
          <MdVolumeUp size={16} />
          <svg width="14" height="16" viewBox="0 0 14 16"><ellipse cx="7" cy="8" rx="6" ry="8" fill="#123f8c" /><FaBluetoothB x="1" y="2" size={12} color="#fff" /></svg>
          <svg width="16" height="16" viewBox="0 0 16 16"><circle cx="8" cy="8" r="8" fill="#2ca5dc" /><rect x="6" y="6" width="9" height="9" rx="2" fill="#e8373d" /><text x="10" y="13" fontSize="7" textAnchor="middle" fill="#fff">.8</text></svg>
          <Clock>14:24<br />10.11.2025</Clock>
        </Tray>
        <ShowDesktop aria-label="Ish stoli" />
      </TaskBar>
    </Screen>
  );
}
